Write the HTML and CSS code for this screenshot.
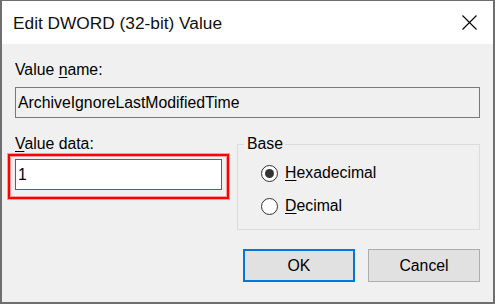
FILE: index.html
```html
<!DOCTYPE html>
<html lang="en">
<head>
  <meta charset="UTF-8">
  <title>Edit DWORD (32-bit) Value</title>
  <link rel="stylesheet" href="styles.css">
</head>
<body>
  <div class="window">
    <div class="titlebar">
      <span class="title">Edit DWORD (32-bit) Value</span>
      <svg class="close" width="15" height="15" viewBox="0 0 15 15">
        <path d="M0.5 0.5 L14.5 14.5 M14.5 0.5 L0.5 14.5" stroke="#000" stroke-width="1.1" fill="none"/>
      </svg>
    </div>

    <div class="content">
      <div class="field-label">Value <u>n</u>ame:</div>
      <div class="name-box">ArchiveIgnoreLastModifiedTime</div>

      <div class="row">
        <div class="data-col">
          <div class="field-label"><u>V</u>alue data:</div>
          <div class="highlight">
            <div class="data-box">1</div>
          </div>
        </div>

        <fieldset class="base">
          <legend>Base</legend>
          <div class="radio">
            <span class="dot checked"></span>
            <span><u>H</u>exadecimal</span>
          </div>
          <div class="radio">
            <span class="dot"></span>
            <span><u>D</u>ecimal</span>
          </div>
        </fieldset>
      </div>

      <div class="buttons">
        <div class="btn default">OK</div>
        <div class="btn">Cancel</div>
      </div>
    </div>
  </div>
</body>
</html>
```

FILE: styles.css
```css
body {
  margin: 0;
  font-family: "Liberation Sans", Arial, sans-serif;
  font-size: 15.8px;
  color: #000;
  background: #fff;
}
.window {
  width: 495px;
  height: 304px;
  box-sizing: border-box;
  border: 2px solid #6f6f6f;
  border-top-width: 1px;
  background-color: #f0f0f0;
}
.titlebar {
  height: 43px;
  background-color: #fff;
  display: flex;
  align-items: center;
  justify-content: space-between;
  padding: 2px 16px 0 11px;
  box-sizing: border-box;
}
.title {
  font-size: 17.3px;
  color: #111;
}
.close {
  display: block;
  margin-top: -2px;
}
.content {
  padding: 17px 13px 0;
}
.field-label {
  line-height: 18px;
}
u {
  text-underline-offset: 2px;
}
.name-box {
  margin-top: 8px;
  height: 31px;
  box-sizing: border-box;
  border: 1px solid #7a7a7a;
  padding: 0 2px;
  display: flex;
  align-items: center;
}
.row {
  display: flex;
  gap: 15px;
  margin-top: 17px;
}
.data-col {
  width: 208px;
}
.highlight {
  position: relative;
  margin-top: 6px;
}
.highlight::after {
  content: "";
  position: absolute;
  top: -5px;
  bottom: -9px;
  left: -7px;
  right: -7px;
  border: 2px solid #ff0000;
  box-shadow: 0 0 0 1px rgba(255, 0, 0, 0.35), inset 0 0 0 1px rgba(255, 0, 0, 0.35);
}
.data-box {
  height: 31px;
  box-sizing: border-box;
  border: 1px solid #0078d7;
  background-color: #fff;
  padding: 0 2px;
  display: flex;
  align-items: center;
}
.base {
  width: 244px;
  height: 95px;
  box-sizing: border-box;
  margin: 0;
  border: 1px solid #dcdcdc;
  padding: 11px 0 0 23px;
  display: flex;
  flex-direction: column;
  gap: 15px;
}
.base legend {
  margin-left: -17px;
  padding: 0 2px 0 3px;
  line-height: 18px;
}
.radio {
  display: flex;
  align-items: center;
  gap: 7px;
  height: 18px;
  line-height: 18px;
}
.dot {
  width: 17px;
  height: 17px;
  box-sizing: border-box;
  border: 1px solid #333;
  border-radius: 50%;
  background-color: #fff;
  display: flex;
  align-items: center;
  justify-content: center;
}
.dot.checked::after {
  content: "";
  width: 9px;
  height: 9px;
  border-radius: 50%;
  background-color: #333;
}
.buttons {
  display: flex;
  justify-content: flex-end;
  gap: 13px;
  margin-top: 19px;
}
.btn {
  width: 112px;
  height: 33px;
  box-sizing: border-box;
  border: 1px solid #adadad;
  background-color: #e1e1e1;
  display: flex;
  align-items: center;
  justify-content: center;
}
.btn.default {
  border: 2px solid #0078d7;
}
```
